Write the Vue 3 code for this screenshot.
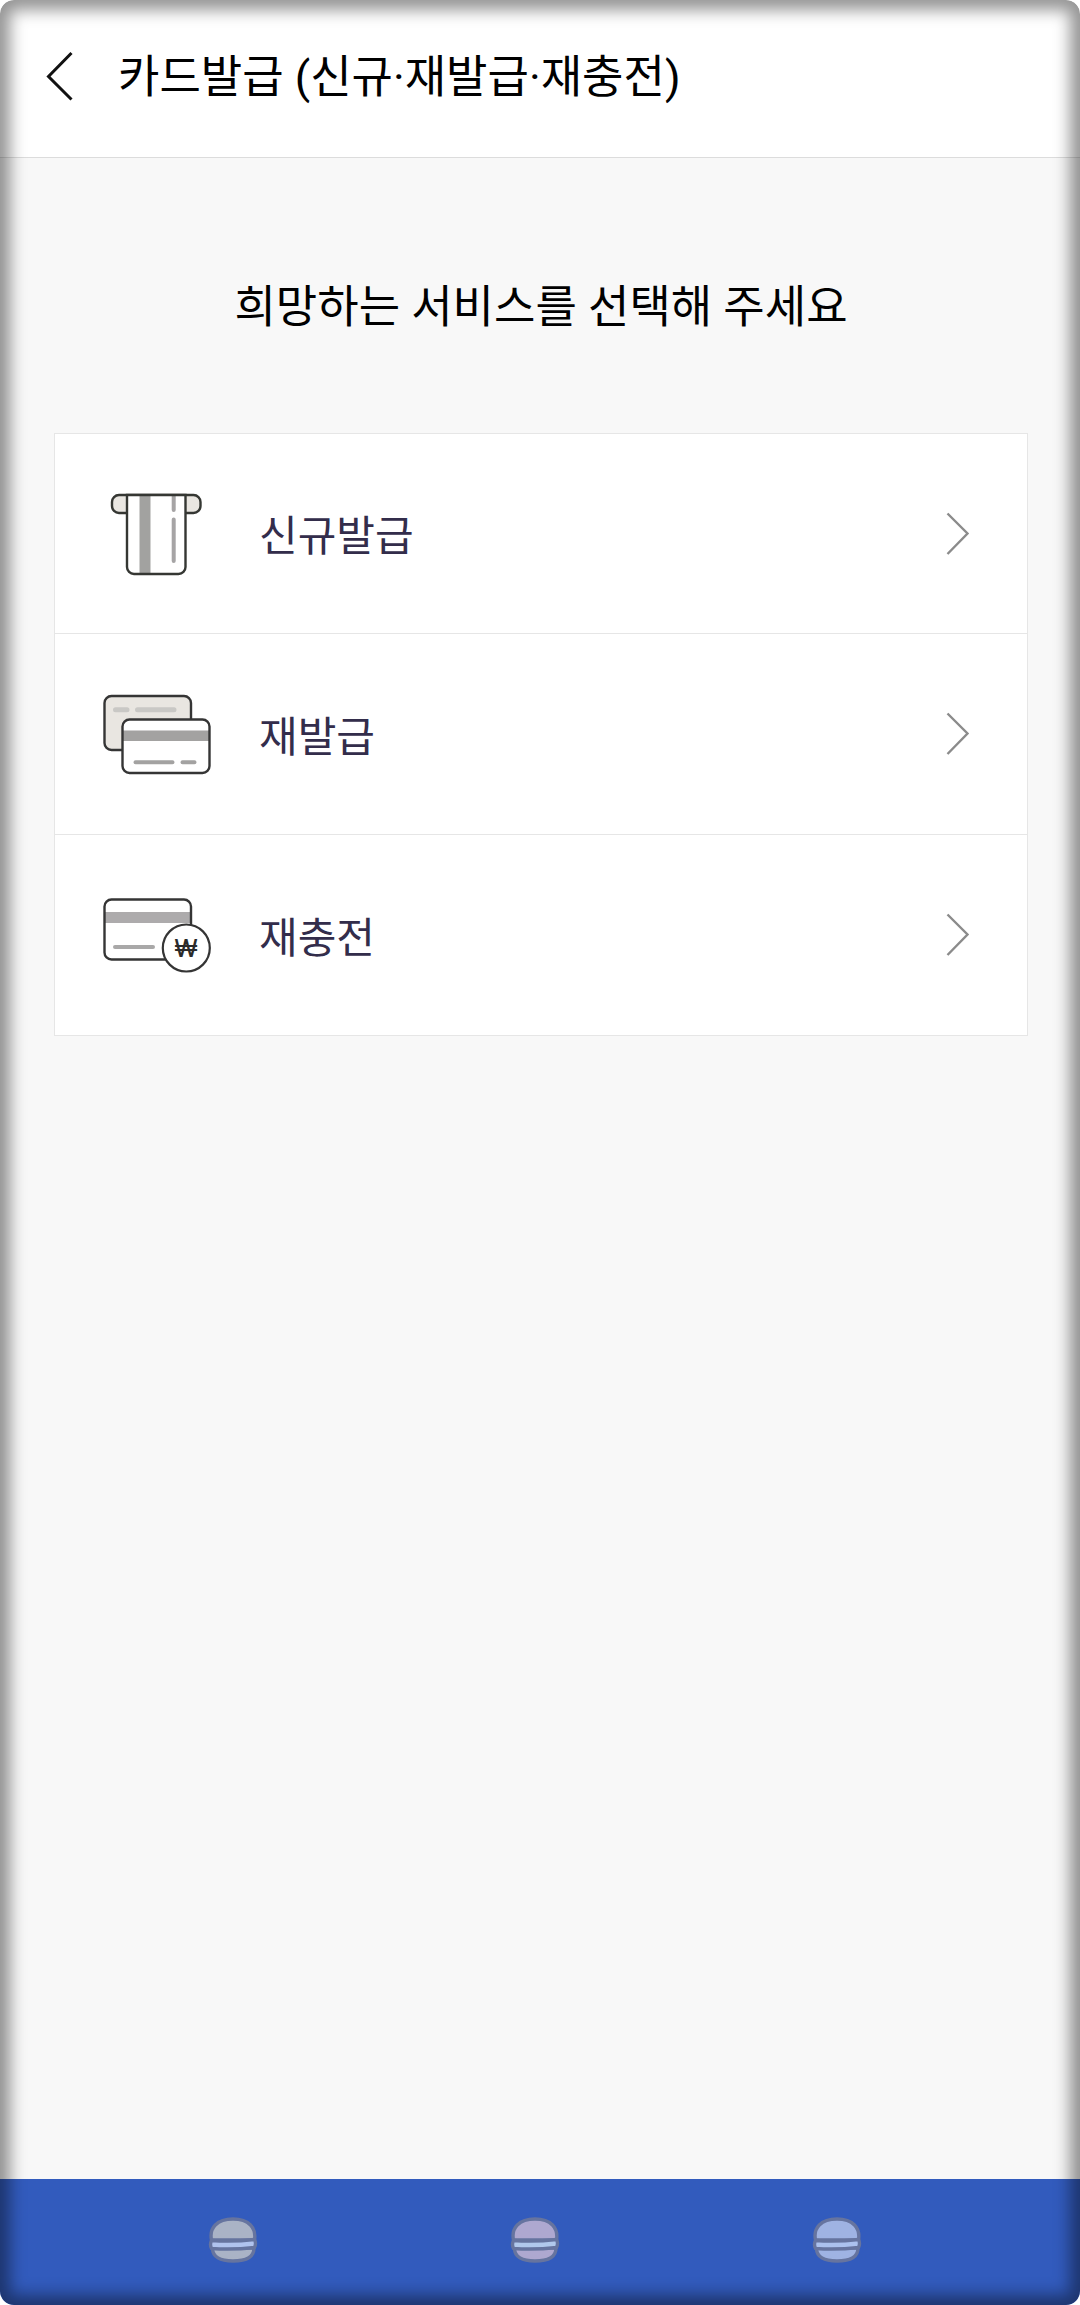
<script setup>
const services = [
  { id: 'new', label: '신규발급' },
  { id: 'reissue', label: '재발급' },
  { id: 'recharge', label: '재충전' },
]

const navItems = [
  { id: 'menu', label: '메뉴', bun: '#aab3c6', filling: '#b0c3ee' },
  { id: 'home', label: '홈', bun: '#aea8d0', filling: '#b0c8ec' },
  { id: 'back', label: '뒤로', bun: '#9fb3e3', filling: '#abc1ee' },
]
</script>

<template>
  <div class="screen">
    <header class="header">
      <button class="back" type="button" aria-label="뒤로 가기">
        <svg width="28" height="50" viewBox="0 0 28 50" fill="none" aria-hidden="true">
          <path d="M25.500 2 L2.500 25.500 L25.500 48.500" stroke="#111" stroke-width="3" />
        </svg>
      </button>
      <h1 class="title">카드발급 (신규·재발급·재충전)</h1>
    </header>

    <main class="main">
      <h2 class="prompt">희망하는 서비스를 선택해 주세요</h2>
      <ul class="list">
        <li v-for="service in services" :key="service.id" class="item">
          <a class="row" href="#">
            <svg v-if="service.id === 'new'" class="icon" viewBox="0 0 108 87" fill="none" aria-hidden="true">
              <rect x="9" y="5" width="88.500" height="18" rx="7" fill="#e9e6e1" stroke="#353733" stroke-width="2.400" />
              <path d="M24 5 H82.500 V77 a7 7 0 0 1 -7 7 H31 a7 7 0 0 1 -7 -7 Z" fill="#fff" />
              <path d="M36.500 5 H47.500 V84 H36.500 Z" fill="#a2a2a0" />
              <path d="M70.700 6 V20 M70.700 29.500 V71" stroke="#a6a4a5" stroke-width="4" stroke-linecap="round" />
              <path d="M24 5 H82.500 V77 a7 7 0 0 1 -7 7 H31 a7 7 0 0 1 -7 -7 Z" stroke="#353733" stroke-width="2.400" />
            </svg>
            <svg v-else-if="service.id === 'reissue'" class="icon" viewBox="0 0 108 87" fill="none" aria-hidden="true">
              <rect x="1.500" y="5" width="86.500" height="54" rx="7" fill="#e9e6e1" stroke="#353535" stroke-width="2.400" />
              <path d="M12.500 18.700 H24 M34.500 18.700 H71" stroke="#c9c8c5" stroke-width="5" stroke-linecap="round" />
              <rect x="19.500" y="28.500" width="87" height="53.500" rx="7" fill="#fff" />
              <rect x="20" y="39.500" width="86" height="10.500" fill="#a3a2a1" />
              <path d="M32.500 71.300 H69.500 M79.500 71.300 H91.500" stroke="#a3a2a1" stroke-width="4" stroke-linecap="round" />
              <rect x="19.500" y="28.500" width="87" height="53.500" rx="7" stroke="#353535" stroke-width="2.400" />
            </svg>
            <svg v-else class="icon" viewBox="0 0 108 87" fill="none" aria-hidden="true">
              <rect x="2" y="20" width="86" height="11" fill="#adabac" />
              <path d="M12 55 H50" stroke="#a9a8a8" stroke-width="4" stroke-linecap="round" />
              <rect x="1.500" y="7.500" width="86.500" height="60" rx="7" stroke="#353535" stroke-width="2.400" />
              <circle cx="83.300" cy="56" r="23.500" fill="#fff" stroke="#353535" stroke-width="2.200" />
              <text class="won" x="83" y="65" text-anchor="middle">₩</text>
            </svg>
            <span class="label">{{ service.label }}</span>
            <svg class="chevron" width="24" height="44" viewBox="0 0 24 44" fill="none" aria-hidden="true">
              <path d="M1.500 1.500 L21.500 21.500 L1.500 42" stroke="#8b8b8b" stroke-width="2.400" />
            </svg>
          </a>
        </li>
      </ul>
    </main>

    <nav class="nav">
      <button v-for="item in navItems" :key="item.id" class="nav-button" type="button" :aria-label="item.label">
        <svg width="50" height="48" viewBox="0 0 50 48" fill="none" aria-hidden="true">
          <g stroke="#66749f" stroke-width="3.400" stroke-linejoin="round">
            <path d="M3.500 24 C1 12 9 3 25 3 C41 3 48.500 12 46.500 24 Z" :fill="item.bun" />
            <path d="M4.500 32 H46 C46 41 38 45 25 45 C12 45 4.500 41 4.500 32 Z" :fill="item.bun" />
            <path d="M3.500 24.500 Q25 26 46.500 23.500 Q48.500 27.500 46.500 31.500 Q25 34 3.500 32.500 Q1.500 28.500 3.500 24.500 Z" :fill="item.filling" />
          </g>
        </svg>
      </button>
    </nav>
  </div>
</template>

<style>
body {
  margin: 0;
  background: #fff;
}
</style>

<style scoped>
.screen {
  position: relative;
  display: flex;
  flex-direction: column;
  min-height: 100vh;
  overflow: hidden;
  border-radius: 14px;
  background: #f8f8f8;
  color: #000;
  font-family: Roboto, "Noto Sans CJK KR", sans-serif;
}

/* Shaded rim over the whole screen */
.screen::after {
  content: "";
  position: absolute;
  inset: 0;
  border-radius: 14px;
  box-shadow: inset 0 0 16px 10px rgba(0, 0, 0, 0.42);
  pointer-events: none;
}

.header {
  display: flex;
  align-items: center;
  gap: 44px;
  height: 152px;
  padding: 0 46px 5px;
  border-bottom: 1px solid #dcdcdc;
  background: #fff;
}

button {
  padding: 0;
  border: 0;
  background: none;
}

.back {
  display: flex;
}

.title,
.prompt {
  margin: 0;
  font-size: 45px;
  font-weight: 400;
  line-height: 64px;
}

.title {
  padding-top: 4px;
}

.main {
  flex: 1;
  padding: 118px 52px 0 54px;
}

.prompt {
  text-align: center;
}

.list {
  margin: 93px 0 0;
  padding: 0;
  list-style: none;
  border: 1px solid #e6e6e6;
  border-bottom: 0;
  background: #fff;
}

.row {
  display: flex;
  align-items: center;
  gap: 48px;
  height: 199px;
  padding: 0 57px 0 48px;
  border-bottom: 1px solid #e6e6e6;
  color: #332d4b;
  text-decoration: none;
}

.item + .item .row {
  height: 200px;
}

.icon {
  width: 108px;
  height: 87px;
}

.won {
  fill: #2b2b2b;
  font-family: Inter, sans-serif;
  font-size: 24px;
  font-weight: 500;
}

.label {
  flex: 1;
  padding-bottom: 1px;
  font-family: "Noto Sans CJK KR", sans-serif;
  font-size: 42px;
  line-height: 60px;
}

.nav {
  display: grid;
  grid-template-columns: repeat(3, 1fr);
  height: 121px;
  padding: 0 92px 5px 82px;
  background: #325bbd;
}

.nav-button {
  display: flex;
  align-items: center;
  justify-content: center;
}
</style>
